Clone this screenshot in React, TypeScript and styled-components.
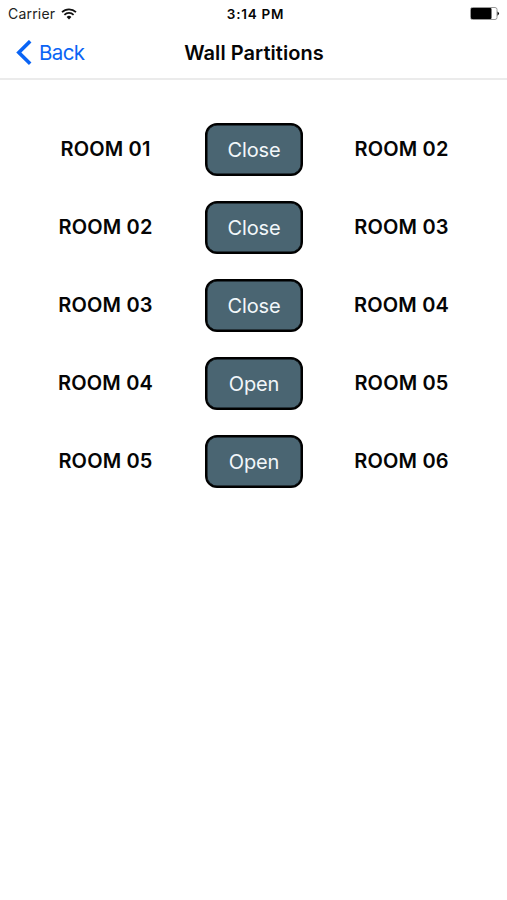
import React from 'react';
import styled, { createGlobalStyle } from 'styled-components';

const GlobalStyle = createGlobalStyle`
  * { box-sizing: border-box; }
  body { margin: 0; background: #fff; font-family: Inter, "Liberation Sans", sans-serif; color: #050505; }
`;
const Screen = styled.main`
  width: 507px;
  height: 900px;
  background: #fff;
  overflow: hidden;
`;
const StatusBar = styled.div`
  height: 27px;
  padding: 0 7px 0 8px;
  display: grid;
  grid-template-columns: 1fr auto 1fr;
  align-items: center;
  font-size: 14px;
  line-height: 26px;
`;
const Carrier = styled.div`
  display: flex;
  align-items: center;
  gap: 6px;
  letter-spacing: 0.2px;
  color: #222;
`;
const Clock = styled.div`
  padding-left: 3px;
  font-size: 13.5px;
  font-weight: 600;
  letter-spacing: 0.75px;
`;
const BatterySlot = styled.div`
  display: flex;
  justify-content: flex-end;
`;
const NavBar = styled.header`
  height: 53px;
  padding: 0 16px;
  display: grid;
  grid-template-columns: 1fr auto 1fr;
  align-items: center;
  border-bottom: 2px solid #ebebeb;
`;
const BackButton = styled.button`
  display: flex;
  align-items: center;
  gap: 7px;
  padding: 0;
  border: 0;
  background: none;
  color: #0a64f5;
  font: 400 20.5px Inter, "Liberation Sans", sans-serif;
  letter-spacing: -0.6px;
`;
const Title = styled.h1`
  margin: 0;
  padding-left: 1px;
  font-size: 20px;
  font-weight: 600;
  letter-spacing: 0.05px;
`;
const List = styled.section`
  padding-top: 43px;
  display: grid;
  row-gap: 25.1px;
`;
const Row = styled.div`
  display: grid;
  grid-template-columns: 192px 98px 192px;
  column-gap: 3px;
  justify-content: center;
  align-items: center;
  height: 53px;
`;
const Room = styled.div`
  padding-bottom: 1px;
  font-size: 20px;
  font-weight: 600;
  letter-spacing: 0.17px;
  text-align: center;
`;
const Toggle = styled.button`
  width: 98px;
  height: 53px;
  padding: 1px 0 0 1px;
  border: 2px solid #000;
  border-radius: 12px;
  box-shadow: inset 0 0 0 0.5px #000;
  background: #4a6572;
  color: #f2f7fa;
  font: 400 20px Inter, "Liberation Sans", sans-serif;
  letter-spacing: -0.15px;
`;

const partitions = [
  { from: 'ROOM 01', to: 'ROOM 02', action: 'Close' },
  { from: 'ROOM 02', to: 'ROOM 03', action: 'Close' },
  { from: 'ROOM 03', to: 'ROOM 04', action: 'Close' },
  { from: 'ROOM 04', to: 'ROOM 05', action: 'Open' },
  { from: 'ROOM 05', to: 'ROOM 06', action: 'Open' },
];

export default function App() {
  return (
    <Screen>
      <GlobalStyle />
      <StatusBar>
        <Carrier>
          Carrier
          <svg width="16" height="12" viewBox="0 0 16 12" fill="none" stroke="#111" strokeWidth="1.7">
            <path d="M1 4.2a10 10 0 0 1 14 0M3.4 6.9a6.4 6.4 0 0 1 9.2 0" />
            <path d="M8 11.5 5.6 9a3.4 3.4 0 0 1 4.8 0Z" fill="#111" stroke="none" />
          </svg>
        </Carrier>
        <Clock>3:14 PM</Clock>
        <BatterySlot>
          <svg width="30" height="13" viewBox="0 0 30 13">
            <rect x=".5" y=".5" width="26.5" height="12" rx="2" fill="#fff" stroke="#999" />
            <rect x="1" y="1" width="20.5" height="11" rx="1" />
            <path d="M27.5 4.5q3 2 0 4.2Z" />
          </svg>
        </BatterySlot>
      </StatusBar>
      <NavBar>
        <BackButton>
          <svg width="16" height="26" viewBox="0 0 16 26" fill="none" stroke="currentColor" strokeWidth="3.6">
            <path d="M14.2 1.2 2.8 12.5l11.4 11.3" />
          </svg>
          Back
        </BackButton>
        <Title>Wall Partitions</Title>
      </NavBar>
      <List>
        {partitions.map((p) => (
          <Row key={p.from}>
            <Room>{p.from}</Room>
            <Toggle>{p.action}</Toggle>
            <Room>{p.to}</Room>
          </Row>
        ))}
      </List>
    </Screen>
  );
}
